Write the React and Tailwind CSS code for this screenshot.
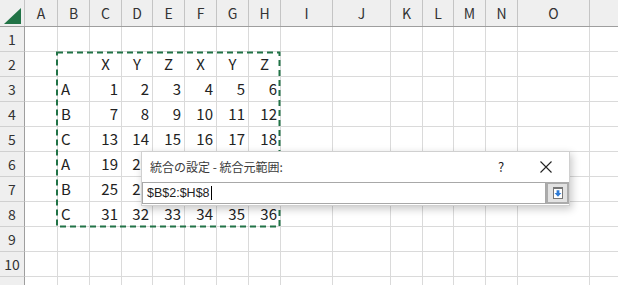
const cols = [
  { k: "A", w: "w-[33px]" },
  { k: "B", w: "w-[32px]" },
  { k: "C", w: "w-[32px]" },
  { k: "D", w: "w-[31px]" },
  { k: "E", w: "w-[32px]" },
  { k: "F", w: "w-[32px]" },
  { k: "G", w: "w-[32px]" },
  { k: "H", w: "w-[32px]" },
  { k: "I", w: "w-[52px]" },
  { k: "J", w: "w-[58px]" },
  { k: "K", w: "w-[32px]" },
  { k: "L", w: "w-[31px]" },
  { k: "M", w: "w-[32px]" },
  { k: "N", w: "w-[32px]" },
  { k: "O", w: "w-[72px]" },
  { k: "", w: "w-[60px]" },
];

// values for columns B..H, by row number
const data = {
  2: ["", "X", "Y", "Z", "X", "Y", "Z"],
  3: ["A", 1, 2, 3, 4, 5, 6],
  4: ["B", 7, 8, 9, 10, 11, 12],
  5: ["C", 13, 14, 15, 16, 17, 18],
  6: ["A", 19, 20, 21, 22, 23, 24],
  7: ["B", 25, 26, 27, 28, 29, 30],
  8: ["C", 31, 32, 33, 34, 35, 36],
};

const rows = [1, 2, 3, 4, 5, 6, 7, 8, 9, 10, 11];

function Cell({ col, ci, r }) {
  const vals = data[r];
  let v = "";
  let align = "justify-end pr-[3px]";
  if (vals && ci >= 1 && ci <= 7) {
    v = vals[ci - 1];
    if (ci === 1) align = "justify-start pl-[3px]";
    else if (r === 2) align = "justify-center";
  }
  return (
    <div
      className={`${col.w} shrink-0 h-full box-border border-r border-b border-[#dadada] flex items-center ${align}`}
    >
      {v}
    </div>
  );
}

function Dialog() {
  return (
    <div className="absolute left-[141px] top-[151px] w-[429px] h-[55px] bg-white border border-[#d0d0d0] shadow-[2px_3px_8px_rgba(0,0,0,0.22)] flex flex-col">
      <div className="h-[30px] flex items-center text-[12px] text-[#3a3a3a]">
        <span className="pl-[8px]">統合の設定 - 統合元範囲:</span>
        <span className="ml-auto w-[30px] text-center text-[13px] text-[#222]">?</span>
        <span className="ml-[15px] mr-[8px] w-[30px] flex justify-center">
          <svg width="12" height="12" viewBox="0 0 12 12">
            <path d="M0.5 0.5 L11.5 11.5 M11.5 0.5 L0.5 11.5" stroke="#222" strokeWidth="1.1" />
          </svg>
        </span>
      </div>
      <div className="flex h-[22px]">
        <div className="flex-1 border border-[#a8a8a8] flex items-center pl-[4px] text-[12.5px] text-[#222] font-['Liberation_Sans',sans-serif]">
          <span>$B$2:$H$8</span>
          <span className="w-px h-[14px] bg-black ml-px" />
        </div>
        <div className="w-[23px] h-full border-2 border-[#ababab] bg-[#e2e2e2] flex items-center justify-center">
          <svg width="10" height="12" viewBox="0 0 10 12">
            <rect x="0.5" y="0.5" width="9" height="11" fill="#fff" stroke="#777" />
            <rect x="0" y="0" width="10" height="2" fill="#777" />
            <path d="M3.6 3.2h2.8v2.9h2L5 9.8 1.6 6.1h2z" fill="#2e7bd6" />
          </svg>
        </div>
      </div>
    </div>
  );
}

export default function App() {
  return (
    <div className="relative w-[618px] h-[285px] overflow-hidden bg-white font-['Noto_Sans_CJK_JP',sans-serif] text-[#222]">
      {/* column headers */}
      <div className="flex h-[27px] bg-[#efefef] border-b border-[#9e9e9e] text-[14px] text-[#333]">
        <div className="w-[25px] shrink-0 h-full border-r border-[#c4c4c4] relative">
          <svg className="absolute left-0 top-0" width="24" height="26" viewBox="0 0 24 26">
            <polygon points="4,24 21,24 21,8" fill="#217346" />
          </svg>
        </div>
        {cols.map((c) => (
          <div
            key={c.k || "p"}
            className={`${c.w} shrink-0 h-full border-r border-[#c4c4c4] flex items-center justify-center`}
          >
            {c.k}
          </div>
        ))}
      </div>

      {/* rows */}
      {rows.map((r) => (
        <div key={r} className="flex h-[25px] text-[15px]">
          <div className="w-[25px] shrink-0 h-full bg-[#efefef] border-r border-b border-r-[#9e9e9e] border-b-[#d0d0d0] flex items-center justify-center text-[14px] text-[#333]">
            {r}
          </div>
          {cols.map((c, ci) => (
            <Cell key={ci} col={c} ci={ci} r={r} />
          ))}
        </div>
      ))}

      {/* copy marquee around B2:H8 */}
      <svg className="absolute left-0 top-0 pointer-events-none" width="618" height="285">
        <rect x="57" y="52.5" width="222.5" height="174" fill="none" stroke="#217346" strokeWidth="2" strokeDasharray="6 4" />
      </svg>

      <Dialog />
    </div>
  );
}
